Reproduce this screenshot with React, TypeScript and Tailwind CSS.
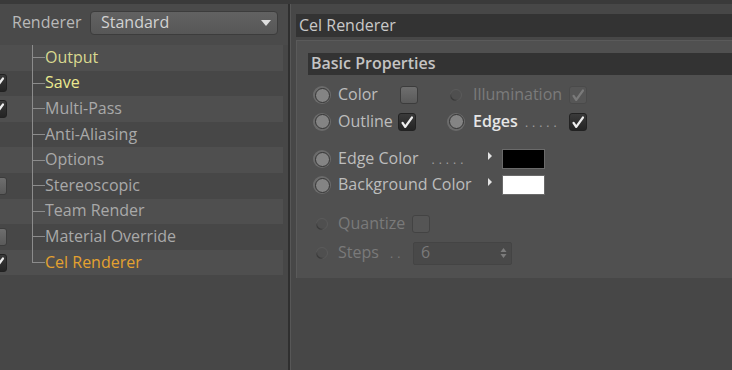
import React from 'react';

const font = { fontFamily: '"Open Sans", "Noto Sans", sans-serif' };

type TreeItem = { label: string; color: string; check?: 'on' | 'off' };

const items: TreeItem[] = [
  { label: 'Output', color: 'text-[#d9d98f]' },
  { label: 'Save', color: 'text-[#ebe98f]', check: 'on' },
  { label: 'Multi-Pass', color: 'text-[#a9a9a9]', check: 'on' },
  { label: 'Anti-Aliasing', color: 'text-[#a9a9a9]' },
  { label: 'Options', color: 'text-[#a9a9a9]' },
  { label: 'Stereoscopic', color: 'text-[#a9a9a9]', check: 'off' },
  { label: 'Team Render', color: 'text-[#a9a9a9]' },
  { label: 'Material Override', color: 'text-[#a9a9a9]', check: 'off' },
  { label: 'Cel Renderer', color: 'text-[#e4a22f]', check: 'on' },
];

const Tick: React.FC<{ dim?: boolean }> = ({ dim }) => (
  <svg width="18" height="18" viewBox="0 0 18 18">
    <path
      d="M4 10 L7 14.5 L14.5 4"
      fill="none"
      stroke={dim ? '#7a7a7a' : '#efefef'}
      strokeWidth="2.6"
      strokeLinecap="round"
      strokeLinejoin="round"
    />
  </svg>
);

const Check: React.FC<{ on?: boolean; dim?: boolean }> = ({ on, dim }) =>
  on ? (
    <div
      className={`w-[18px] h-[18px] rounded-[3px] border shrink-0 flex items-center justify-center ${
        dim ? 'bg-[#565656] border-[#4a4a4a]' : 'bg-gradient-to-b from-[#3a3a3a] to-[#242424] border-[#222222]'
      }`}
    >
      <Tick dim={dim} />
    </div>
  ) : (
    <div
      className={`w-[18px] h-[18px] rounded-[3px] border shrink-0 ${
        dim
          ? 'bg-[#555555] border-[#434343]'
          : 'bg-gradient-to-b from-[#6e6e6e] to-[#5a5a5a] border-[#3c3c3c]'
      }`}
    />
  );

const Radio: React.FC<{ disabled?: boolean }> = ({ disabled }) =>
  disabled ? (
    <div className="w-[18px] h-[18px] flex items-center justify-center shrink-0">
      <svg width="14" height="14" viewBox="0 0 14 14">
        <circle cx="7" cy="7" r="5.5" fill="#4f4f4f" stroke="#5b5b5b" strokeWidth="1" />
        <path d="M2.5 5 A5 5 0 0 0 9.5 11.2 A4.2 4.2 0 0 1 2.5 5 Z" fill="#3a3a3a" />
      </svg>
    </div>
  ) : (
    <div className="w-[18px] h-[18px] rounded-full bg-[#6b6b6b] flex items-center justify-center shrink-0">
      <div className="w-[15px] h-[15px] rounded-full border-[1.5px] border-[#343434] bg-[#848484]" />
    </div>
  );

const Dots: React.FC<{ n: number; className?: string }> = ({ n, className }) => (
  <span className={`tracking-[4px] text-[12px] ${className ?? 'text-[#9a9a9a]'}`}>{' ' + '.'.repeat(n)}</span>
);

const Arrow = () => (
  <svg width="8" height="10" viewBox="0 0 8 10" className="-mt-[6px]">
    <path d="M2 1 L6 5 L2 9 Z" fill="#e4e4e4" />
  </svg>
);

const App: React.FC = () => {
  return (
    <div style={font} className="w-[732px] h-[370px] bg-[#474747] overflow-hidden flex flex-col text-[16px]">
      <div className="h-[4px] bg-[#3a3a3a] shrink-0" />
      <div className="flex flex-1">
        {/* Left: render settings tree */}
        <div className="w-[288px] shrink-0 flex flex-col">
          <div className="h-[41px] bg-[#4a4a4a] flex items-center pl-[12px] pb-[3px]">
            <span className="text-[#b9b9b9] w-[78px] leading-none -mt-[2px]">Renderer</span>
            <div className="w-[188px] h-[24px] rounded-[4px] border border-[#3c3c3c] bg-gradient-to-b from-[#626262] to-[#575757] flex items-center justify-between pl-[10px] pr-[6px]">
              <span className="text-[#d2d2d2] leading-none -mt-[3px]">Standard</span>
              <svg width="10" height="6" viewBox="0 0 10 6">
                <path d="M0 0 H10 L5 6 Z" fill="#dedede" />
              </svg>
            </div>
          </div>
          <div className="w-[283px]">
            {items.map((it, i) => (
              <div
                key={it.label}
                className={`h-[25.6px] flex items-center ${i % 2 === 0 ? 'bg-[#4f4f4f]' : 'bg-[#474747]'}`}
              >
                <div className="w-[32px] h-full flex items-center">
                  {it.check && (
                    <div className="-ml-[11px]">
                      <Check on={it.check === 'on'} />
                    </div>
                  )}
                </div>
                <div className="w-[13px] h-full flex flex-col">
                  <div className="flex-1 border-l border-b border-[#8c8c8c]" />
                  <div className={`flex-1 ${i < items.length - 1 ? 'border-l border-[#8c8c8c]' : ''}`} />
                </div>
                <span className={`${it.color} leading-none -mt-[2px]`}>{it.label}</span>
              </div>
            ))}
          </div>
        </div>

        {/* Divider */}
        <div className="w-[3px] shrink-0 bg-[#2f2f2f] border-r border-[#575757]" />

        {/* Right: Cel Renderer settings */}
        <div className="flex-1 pl-[5px] pt-[10px] flex flex-col">
          <div className="h-[23px] bg-[#333333] flex items-center pl-[3px]">
            <span className="text-[#c9c9c9] leading-none -mt-[2px]">Cel Renderer</span>
          </div>
          <div className="mt-[3px] bg-[#505050] border-l border-t border-[#5a5a5a] pt-[12px] pl-[11px] pb-[12px]">
            <div className="h-[22px] bg-[#333333] flex items-center pl-[3px]">
              <span className="text-[#c4c4c4] font-semibold leading-none -mt-[2px]">Basic Properties</span>
            </div>

            <div className="pl-[5px] pt-[7px] text-[#bdbdbd]">
              {/* Color / Illumination */}
              <div className="h-[26px] flex items-center">
                <div className="w-[134px] flex items-center">
                  <Radio />
                  <span className="ml-[7px] w-[62px] leading-none -mt-[2px]">Color</span>
                  <Check />
                </div>
                <Radio disabled />
                <span className="ml-[8px] w-[96px] text-[#7b7b7b] leading-none -mt-[2px]">Illumination</span>
                <Check on dim />
              </div>
              {/* Outline / Edges */}
              <div className="h-[27px] flex items-center">
                <div className="w-[134px] flex items-center">
                  <Radio />
                  <span className="ml-[7px] w-[60px] leading-none -mt-[2px]">Outline</span>
                  <Check on />
                </div>
                <Radio />
                <span className="ml-[8px] w-[96px] leading-none -mt-[2px] whitespace-nowrap">
                  <span className="text-[#e6e6e6] font-semibold">Edges</span>
                  <Dots n={5} className="text-[#a0a0a0]" />
                </span>
                <Check on />
              </div>

              {/* Colors */}
              <div className="mt-[11px] h-[26px] flex items-center">
                <Radio />
                <span className="ml-[7px] w-[148px] leading-none -mt-[2px] whitespace-nowrap">
                  Edge Color
                  <Dots n={5} className="text-[#a0a0a0] ml-[6px]" />
                </span>
                <Arrow />
                <div className="ml-[8px] w-[43px] h-[20px] bg-black border border-[#6a6a6a]" />
              </div>
              <div className="h-[26px] flex items-center">
                <Radio />
                <span className="ml-[7px] w-[148px] leading-none -mt-[2px] whitespace-nowrap">Background Color</span>
                <Arrow />
                <div className="ml-[8px] w-[43px] h-[20px] bg-white border border-[#6a6a6a]" />
              </div>

              {/* Disabled quantize */}
              <div className="mt-[13px] h-[26px] flex items-center text-[#7a7a7a]">
                <Radio disabled />
                <span className="ml-[7px] w-[74px] leading-none -mt-[2px]">Quantize</span>
                <Check dim />
              </div>
              <div className="mt-[3px] h-[26px] flex items-center text-[#7a7a7a]">
                <Radio disabled />
                <span className="ml-[7px] w-[75px] leading-none -mt-[2px] whitespace-nowrap">
                  Steps
                  <Dots n={2} className="text-[#7a7a7a] ml-[4px]" />
                </span>
                <div className="w-[99px] h-[23px] bg-[#494949] border border-[#444444] rounded-[2px] flex items-center justify-between pl-[7px] pr-[4px]">
                  <span className="leading-none -mt-[2px]">6</span>
                  <svg width="7" height="12" viewBox="0 0 7 12">
                    <path d="M0.5 5 L3.5 1 L6.5 5 Z M0.5 7 L3.5 11 L6.5 7 Z" fill="#7c7c7c" />
                  </svg>
                </div>
              </div>
            </div>
          </div>
        </div>
      </div>
    </div>
  );
};

export default App;
